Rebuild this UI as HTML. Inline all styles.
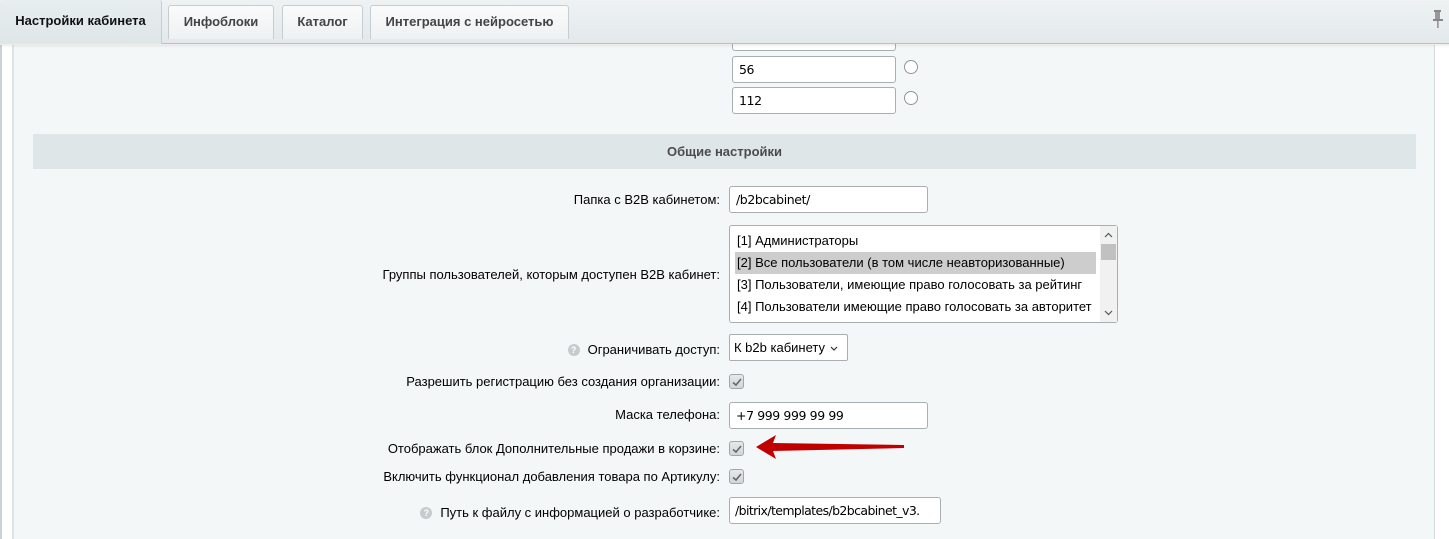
<!DOCTYPE html>
<html><head><meta charset="utf-8"><style>
*{box-sizing:border-box}
body{margin:0;width:1449px;height:539px;overflow:hidden;background:#fff;font-family:"Liberation Sans",Arial,sans-serif;font-size:13px;color:#000;position:relative}
.tabbar{position:absolute;z-index:5;left:0;top:0;width:1449px;height:44px;background:linear-gradient(#eef2f3,#e3e9eb);border-bottom:1px solid #b9c1c4}
.tabbar:after{content:"";position:absolute;left:0;right:0;top:44px;height:4px;background:linear-gradient(rgba(0,0,0,.08),rgba(0,0,0,0))}
.tab{position:absolute;top:5px;height:34px;border:1px solid #c5cdd0;border-bottom:none;border-radius:3px 3px 0 0;background:linear-gradient(#fafbfb,#eef1f2);font-weight:bold;color:#444;font-size:13px;line-height:32px;text-align:center}
.tab.act{top:0;height:44px;border:none;background:linear-gradient(#e8eef0,#dfe6e8);color:#111;line-height:42px;left:0;width:162px;border-right:1px solid #c5cdd0}
.content{position:absolute;left:12px;top:45px;width:1423px;height:494px;background:#f4f7f8;border-left:2px solid #dde3e5;border-right:1px solid #d5dcde}
.leftstrip{position:absolute;left:0;top:45px;width:2px;height:494px;background:#c9d2d5}
.inp{position:absolute;height:27px;background:#fff;border:1px solid #a9aeb3;border-radius:3px;padding-left:6px;line-height:25px;font-size:12.5px;font-family:"DejaVu Sans","Liberation Sans",sans-serif;letter-spacing:-0.4px;overflow:hidden;white-space:nowrap}
.radio{position:absolute;width:14px;height:14px;border:1px solid #8f969b;border-radius:50%;background:#fff}
.hdr{position:absolute;left:33px;top:134px;width:1383px;height:35px;background:#dfe6e8;text-align:center;line-height:35px;font-weight:bold;color:#4b4b4b}
.lbl{position:absolute;right:729px;text-align:right;white-space:nowrap;color:#000}
.cb{position:absolute;left:729px;width:15px;height:15px;border:1px solid #9fa6ab;border-radius:3px;background:linear-gradient(#e6e8ea,#d2d6d9)}
.cb svg{position:absolute;left:1px;top:1px}
.help{display:inline-block;width:12px;height:12px;border-radius:50%;background:#c7cbce;color:#fff;font-size:9px;line-height:12px;text-align:center;font-weight:bold;vertical-align:1px;margin-right:8px}
.list{position:absolute;left:729px;top:225px;width:389px;height:98px;background:#fff;border:1px solid #a9aeb3;border-radius:3px}
.list div{position:absolute;left:5px;height:22px;line-height:22px;font-size:13px;padding-left:2px}
</style></head><body>
<div class="tabbar">
<div class="tab act">Настройки кабинета</div>
<div class="tab" style="left:168px;width:106px">Инфоблоки</div>
<div class="tab" style="left:282px;width:81px">Каталог</div>
<div class="tab" style="left:370px;width:199px">Интеграция с нейросетью</div>
<svg style="position:absolute;left:1432px;top:9px" width="12" height="20" viewBox="0 0 12 20"><rect x="2" y="1" width="7" height="2" fill="#888"/><rect x="3" y="3" width="5" height="7" fill="#999"/><rect x="1" y="10" width="10" height="2" fill="#888"/><rect x="5.2" y="12" width="1.4" height="7" fill="#888"/></svg>
</div>
<div class="leftstrip"></div>
<div class="content"></div>
<div class="inp" style="left:732px;top:24px;width:164px;height:27px"></div>
<div class="inp" style="left:732px;top:56px;width:164px">56</div>
<div class="radio" style="left:904px;top:60px"></div>
<div class="inp" style="left:732px;top:87px;width:164px">112</div>
<div class="radio" style="left:904px;top:91px"></div>
<div class="hdr">Общие настройки</div>
<div class="lbl" style="top:192px">Папка с B2B кабинетом:</div>
<div class="inp" style="left:729px;top:186px;width:199px">/b2bcabinet/</div>
<div class="lbl" style="top:267px">Группы пользователей, которым доступен B2B кабинет:</div>
<div class="list">
<div style="top:4px">[1] Администраторы</div>
<div style="top:26px;width:361px;background:#cdcdcd">[2] Все пользователи (в том числе неавторизованные)</div>
<div style="top:48px">[3] Пользователи, имеющие право голосовать за рейтинг</div>
<div style="top:70px">[4] Пользователи имеющие право голосовать за авторитет</div>
<div style="left:370px;top:0;width:17px;height:96px;padding:0;background:#f1f1f1"></div>
<div style="left:371px;top:18px;width:15px;height:16px;padding:0;background:#c1c1c1"></div>
<svg style="position:absolute;left:374px;top:6px" width="9" height="6"><path d="M1 5 L4.5 1.5 L8 5" stroke="#555" stroke-width="1.2" fill="none"/></svg>
<svg style="position:absolute;left:374px;top:84px" width="9" height="6"><path d="M1 1 L4.5 4.5 L8 1" stroke="#555" stroke-width="1.2" fill="none"/></svg>
</div>
<div class="lbl" style="top:342px"><span class="help">?</span>Ограничивать доступ:</div>
<div class="inp" style="left:729px;top:334px;width:119px;font-family:'Liberation Sans',sans-serif;font-size:13px;letter-spacing:0;padding-left:4px;border-radius:2px">К b2b кабинету
<svg style="position:absolute;left:100px;top:11px" width="8" height="6"><path d="M1 1 L4 4 L7 1" stroke="#333" stroke-width="1.2" fill="none"/></svg></div>
<div class="lbl" style="top:374px">Разрешить регистрацию без создания организации:</div>
<div class="cb" style="top:374px"><svg width="12" height="12"><path d="M2 6.5 L5 9 L10 3" stroke="#666" stroke-width="1.6" fill="none"/></svg></div>
<div class="lbl" style="top:407px">Маска телефона:</div>
<div class="inp" style="left:729px;top:402px;width:199px">+7 999 999 99 99</div>
<div class="lbl" style="top:441px">Отображать блок Дополнительные продажи в корзине:</div>
<div class="cb" style="top:441px"><svg width="12" height="12"><path d="M2 6.5 L5 9 L10 3" stroke="#666" stroke-width="1.6" fill="none"/></svg></div>
<svg style="position:absolute;left:752px;top:432px" width="156" height="30" viewBox="0 0 156 30"><path d="M4 15 L24 3 L21 11 L152 13 L152 16 L21 19 L24 27 Z" fill="#c00000"/></svg>
<div class="lbl" style="top:469px">Включить функционал добавления товара по Артикулу:</div>
<div class="cb" style="top:469px"><svg width="12" height="12"><path d="M2 6.5 L5 9 L10 3" stroke="#666" stroke-width="1.6" fill="none"/></svg></div>
<div class="lbl" style="top:505px"><span class="help">?</span>Путь к файлу с информацией о разработчике:</div>
<div class="inp" style="left:729px;top:497px;width:212px;padding-left:5px;letter-spacing:-0.6px">/bitrix/templates/b2bcabinet_v3.</div>
</body></html>
